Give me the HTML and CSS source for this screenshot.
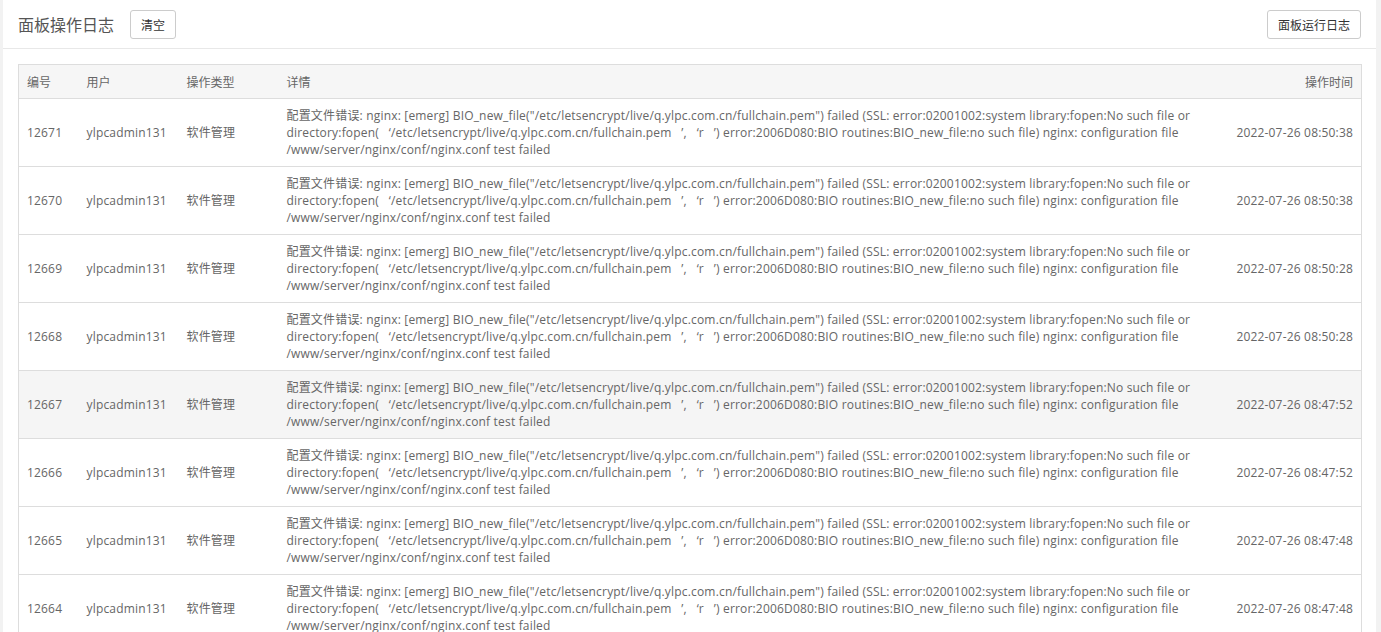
FILE: index.html
```html
<!DOCTYPE html>
<html lang="zh-CN">
<head>
    <meta charset="UTF-8">
    <title>面板操作日志</title>
    <link rel="stylesheet" href="styles.css">
</head>
<body>
    <div class="panel">
        <div class="panel-head">
            <div class="head-left">
                <span class="panel-title">面板操作日志</span>
                <button class="btn">清空</button>
            </div>
            <button class="btn">面板运行日志</button>
        </div>
        <div class="panel-body">
            <table class="log-table">
                <thead>
                    <tr>
                        <th class="col-id">编号</th>
                        <th class="col-user">用户</th>
                        <th class="col-type">操作类型</th>
                        <th>详情</th>
                        <th class="col-time">操作时间</th>
                    </tr>
                </thead>
                <tbody id="logRows"></tbody>
            </table>
        </div>
    </div>

    <script>
        const logs = [
            [12671, '2022-07-26 08:50:38'],
            [12670, '2022-07-26 08:50:38'],
            [12669, '2022-07-26 08:50:28'],
            [12668, '2022-07-26 08:50:28'],
            [12667, '2022-07-26 08:47:52'],
            [12666, '2022-07-26 08:47:52'],
            [12665, '2022-07-26 08:47:48'],
            [12664, '2022-07-26 08:47:48']
        ];

        const detail = '配置文件错误: nginx: [emerg] BIO_new_file("/etc/letsencrypt/live/q.ylpc.com.cn/fullchain.pem") failed (SSL: error:02001002:system library:fopen:No such file or directory:fopen(<span class="q">‘</span>/etc/letsencrypt/live/q.ylpc.com.cn/fullchain.pem<span class="q">’</span>,<span class="q">‘</span>r<span class="q">’</span>) error:2006D080:BIO routines:BIO_new_file:no such file) nginx: configuration file /www/server/nginx/conf/nginx.conf test failed';

        document.getElementById('logRows').innerHTML = logs.map((log, i) => `
            <tr class="${i === 4 ? 'hover' : ''}">
                <td>${log[0]}</td>
                <td>ylpcadmin131</td>
                <td>软件管理</td>
                <td>${detail}</td>
                <td class="col-time">${log[1]}</td>
            </tr>`).join('');
    </script>
</body>
</html>
```

FILE: styles.css
```css
* {
    margin: 0;
    padding: 0;
    box-sizing: border-box;
}

body {
    background: #f2f2f2;
    font-family: "Microsoft YaHei", "Open Sans", "Noto Sans CJK SC", sans-serif;
    color: #666;
    font-size: 12px;
    overflow: hidden;
}

.panel {
    margin-left: 3px;
    width: 1373px;
    background: #fff;
    min-height: 632px;
}

.panel-head {
    height: 49px;
    padding: 0 15px;
    border-bottom: 1px solid #e8e8e8;
    display: flex;
    justify-content: space-between;
    align-items: center;
}

.head-left {
    display: flex;
    align-items: center;
}

.panel-title {
    font-size: 16px;
    color: #555;
    margin-right: 16px;
    font-family: "Noto Sans CJK SC", sans-serif;
}

.btn {
    height: 29px;
    padding: 0 10px;
    background: #fff;
    border: 1px solid #ccc;
    border-radius: 3px;
    color: #333;
    font-size: 12px;
    font-family: "Noto Sans CJK SC", sans-serif;
}

.panel-body {
    padding: 15px 14px 0 15px;
}

.log-table {
    width: 100%;
    border-collapse: collapse;
    border: 1px solid #ddd;
}

.log-table th,
.log-table td {
    padding: 8px 8px;
    line-height: 17px;
    text-align: left;
    font-weight: normal;
    vertical-align: middle;
    border-bottom: 1px solid #ddd;
}

.log-table td {
    letter-spacing: 0.18px;
}

.log-table th {
    background: #f6f6f6;
    color: #666;
    font-family: "Noto Sans CJK SC", sans-serif;
}

.log-table .col-id { width: 60px; }
.log-table .col-user { width: 100px; }
.log-table .col-type { width: 100px; }

.log-table .col-time {
    text-align: right;
    white-space: nowrap;
    width: 136px;
}

.log-table tr.hover td {
    background: #f5f5f5;
}

/* full-width quotes as the panel font draws them */
.q {
    display: inline-block;
    width: 12px;
    text-align: right;
}
```
